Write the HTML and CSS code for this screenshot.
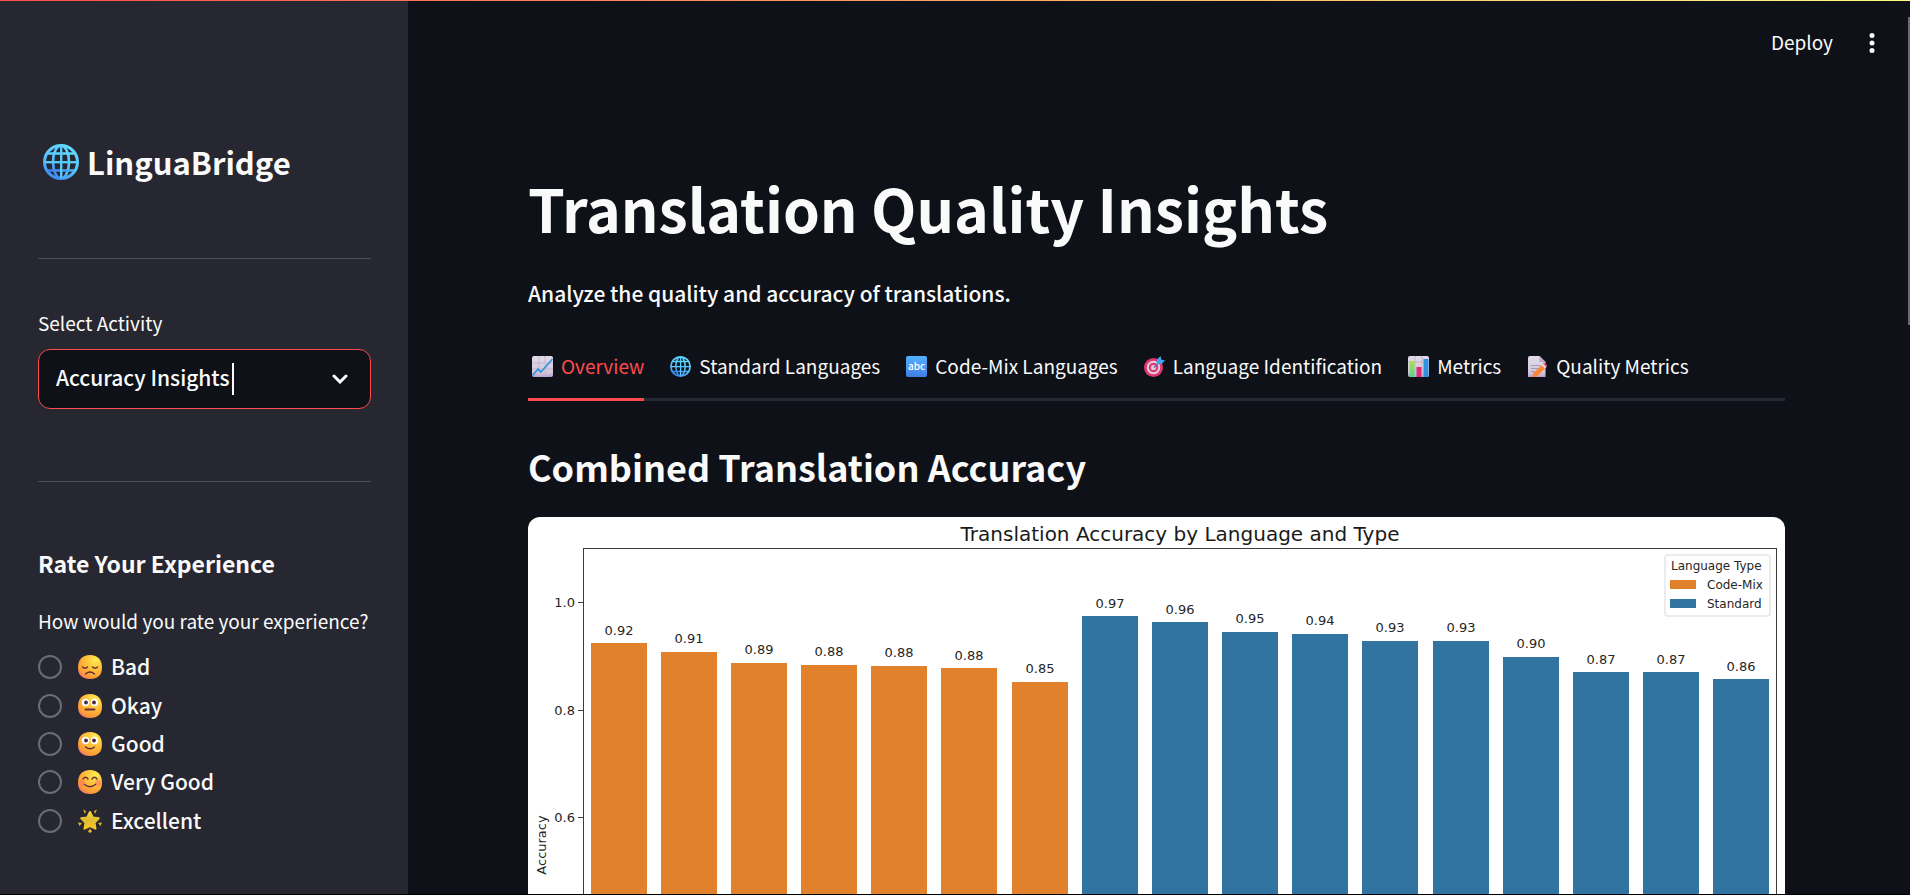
FILE: index.html
```html
<!DOCTYPE html>
<html lang="en">
<head>
<meta charset="utf-8">
<meta name="viewport" content="width=device-width, initial-scale=1">
<title>LinguaBridge</title>
<link rel="stylesheet" href="styles.css">
</head>
<body>
<svg class="defs" aria-hidden="true">
  <defs>
    <linearGradient id="blue" x1="0.7" y1="0" x2="0.2" y2="1"><stop offset="0" stop-color="#5fd8ff"/><stop offset="0.6" stop-color="#55c0ff"/><stop offset="1" stop-color="#3b86f0"/></linearGradient>
    <linearGradient id="tile" x1="0" y1="0" x2="0" y2="1"><stop offset="0" stop-color="#54b0ff"/><stop offset="1" stop-color="#3f7fe6"/></linearGradient>
    <linearGradient id="paper" x1="0" y1="0" x2="0" y2="1"><stop offset="0" stop-color="#e2dbe8"/><stop offset="0.8" stop-color="#d2c6dc"/><stop offset="1" stop-color="#b99fd0"/></linearGradient>
    <radialGradient id="face" cx="0.72" cy="0.2" r="0.95"><stop offset="0" stop-color="#ffea4f"/><stop offset="0.5" stop-color="#ffb938"/><stop offset="0.82" stop-color="#fc9938"/><stop offset="1" stop-color="#f0609a"/></radialGradient>
    <linearGradient id="star" x1="0" y1="0" x2="0" y2="1"><stop offset="0" stop-color="#fbd83a"/><stop offset="0.5" stop-color="#dfbb35"/><stop offset="1" stop-color="#f9c723"/></linearGradient>
    <linearGradient id="green" x1="0" y1="0" x2="0" y2="1"><stop offset="0" stop-color="#b4dc4e"/><stop offset="1" stop-color="#4fd68c"/></linearGradient>
    <symbol id="globe" viewBox="0 0 36 36">
      <g fill="none" stroke="url(#blue)" stroke-width="2.600">
        <circle cx="18" cy="18" r="16.500" stroke-width="3"/>
        <ellipse cx="18" cy="18" rx="8" ry="16.200"/>
        <path d="M4.500 9.500h27M4.500 26.500h27"/>
      </g>
      <g fill="#58c9ff"><rect x="17" y="2" width="2.400" height="32"/><rect x="2" y="17" width="32" height="2.400"/></g>
    </symbol>
    <symbol id="headshape" viewBox="0 0 24 24"><path d="M12 0C4 0 0 5 0 12.500 0 20 4 24 12 24s12-4 12-11.500C24 5 20 0 12 0z" fill="url(#face)"/></symbol>
  </defs>
</svg>

<div class="app">
  <aside class="sidebar">
    <h2 class="brand"><svg class="brand-icon" aria-hidden="true"><use href="#globe"/></svg>LinguaBridge</h2>
    <hr class="rule">
    <label class="field-label" for="activity">Select Activity</label>
    <div class="select-box">
      <select id="activity" class="select"><option>Accuracy Insights</option></select>
      <span class="text-cursor"></span>
      <svg class="chevron" viewBox="0 0 16 10" aria-hidden="true"><path d="M2 2l6 6 6-6" fill="none" stroke="#fafafa" stroke-width="3" stroke-linecap="round" stroke-linejoin="miter"/></svg>
    </div>
    <hr class="rule rule-second">
    <h3 class="rate-title">Rate Your Experience</h3>
    <fieldset class="rating">
      <legend class="rating-legend">How would you rate your experience?</legend>
      <div class="options">
        <label class="option"><input class="radio" type="radio" name="rating">
          <svg class="emoji" viewBox="0 0 24 24" aria-hidden="true"><use href="#headshape"/><g fill="none" stroke="#613139" stroke-width="1.400" stroke-linecap="round"><path d="M4.500 12q2.500 2.500 5 0M14.500 12q2.500 2.500 5 0M7.500 19q4.500-3.800 9 0"/></g></svg>
          <span>Bad</span></label>
        <label class="option"><input class="radio" type="radio" name="rating">
          <svg class="emoji" viewBox="0 0 24 24" aria-hidden="true"><use href="#headshape"/><g fill="#fff"><circle cx="7.500" cy="8.500" r="3.700"/><circle cx="16.500" cy="8.500" r="3.700"/></g><g fill="#4a2545"><circle cx="8" cy="8.500" r="1.900"/><circle cx="16" cy="8.500" r="1.900"/></g><path d="M7.500 15.500h9" stroke="#613139" stroke-width="1.800" stroke-linecap="round"/></svg>
          <span>Okay</span></label>
        <label class="option"><input class="radio" type="radio" name="rating">
          <svg class="emoji" viewBox="0 0 24 24" aria-hidden="true"><use href="#headshape"/><g fill="#fff"><circle cx="7.500" cy="8.500" r="3.700"/><circle cx="16.500" cy="8.500" r="3.700"/></g><g fill="#4a2545"><circle cx="8" cy="8.500" r="1.900"/><circle cx="16" cy="8.500" r="1.900"/></g><path d="M7.500 15q4.500 3.400 9 0" fill="none" stroke="#613139" stroke-width="1.400" stroke-linecap="round"/></svg>
          <span>Good</span></label>
        <label class="option"><input class="radio" type="radio" name="rating">
          <svg class="emoji" viewBox="0 0 24 24" aria-hidden="true"><use href="#headshape"/><g fill="#ff7a63" opacity="0.6"><circle cx="4" cy="13" r="3"/><circle cx="20" cy="13" r="3"/></g><g fill="none" stroke="#613139" stroke-width="1.400" stroke-linecap="round"><path d="M5 9q2.500-3.400 5 0M14 9q2.500-3.400 5 0M6.500 14.500q5.500 4.400 11 0"/></g></svg>
          <span>Very Good</span></label>
        <label class="option"><input class="radio" type="radio" name="rating">
          <svg class="emoji" viewBox="0 0 24 24" aria-hidden="true"><g fill="url(#star)" stroke="url(#star)" stroke-linejoin="round" stroke-width="2"><path d="M12 3l2.800 5.400 6 .9-4.300 4.400 1 6L12 17l-5.500 2.700 1-6L3.200 9.300l6-.9z"/></g><g fill="#e3b62a"><path d="M5 .5l3 1.500-1 3zM19 .5l-3 1.500 1 3zM0 13.500l4 .5-2.500 3zM24 13.500l-4 .5 2.500 3zM12 19.500l2 3q-2 2.400-4 0z"/></g></svg>
          <span>Excellent</span></label>
      </div>
    </fieldset>
  </aside>

  <main class="main">
    <header class="toolbar">
      <button class="deploy" type="button">Deploy</button>
      <button class="menu" type="button" aria-label="Menu"><svg class="dots" viewBox="0 0 6 20" aria-hidden="true"><g fill="#fafafa"><circle cx="3" cy="2.500" r="2.500"/><circle cx="3" cy="10" r="2.500"/><circle cx="3" cy="17.500" r="2.500"/></g></svg></button>
    </header>
    <h1 class="title">Translation Quality Insights</h1>
    <p class="lead">Analyze the quality and accuracy of translations.</p>
    <div class="tabs" role="tablist">
      <button class="tab tab-active" type="button" role="tab" aria-selected="true"><svg class="tab-icon" viewBox="0 0 21 21" aria-hidden="true"><rect width="21" height="21" rx="2" fill="url(#paper)"/><path d="M7 0v21M13 0v21M0 7h21M0 13h21" stroke="#c3b8cd" stroke-width="1"/><path d="M.5 19.500l5.500-6.500 3 3L20.500 3" fill="none" stroke="#3596df" stroke-width="1.800"/></svg>Overview</button>
      <button class="tab" type="button" role="tab"><svg class="tab-icon" aria-hidden="true"><use href="#globe"/></svg>Standard Languages</button>
      <button class="tab" type="button" role="tab"><svg class="tab-icon" viewBox="0 0 21 21" aria-hidden="true"><rect width="21" height="21" rx="2" fill="url(#tile)"/><text class="abc" x="10.500" y="14" text-anchor="middle">abc</text></svg>Code-Mix Languages</button>
      <button class="tab" type="button" role="tab"><svg class="tab-icon" viewBox="0 0 21 21" aria-hidden="true"><circle cx="9.500" cy="11.500" r="9.500" fill="#e0376f"/><circle cx="9.500" cy="11.500" r="6.700" fill="#e3d3e4"/><circle cx="9.500" cy="11.500" r="4.800" fill="#dc3a70"/><circle cx="9.500" cy="11.500" r="2.600" fill="#dfcbdc"/><path d="M10 11.500l5-5" stroke="#7b6ca8" stroke-width="1.600"/><path d="M12.500 7.500l.5-4L16.500 0l.8 3.500 3.700 1-3.500 3.500z" fill="#3fa5f0"/></svg>Language Identification</button>
      <button class="tab" type="button" role="tab"><svg class="tab-icon" viewBox="0 0 21 21" aria-hidden="true"><rect width="21" height="21" rx="2" fill="url(#paper)"/><path d="M7 0v21M14 0v21M0 6h21" stroke="#c3b8cd" stroke-width="1"/><rect x="1.500" y="5" width="5" height="16" fill="url(#green)"/><rect x="8.500" y="11" width="5" height="10" fill="#dc2e78"/><rect x="15.500" y="3" width="5" height="18" fill="#2f93e2"/></svg>Metrics</button>
      <button class="tab" type="button" role="tab"><svg class="tab-icon" viewBox="0 0 21 21" aria-hidden="true"><path d="M3 0h9.500L18.500 6v15H1V2q0-2 2-2z" fill="url(#paper)"/><path d="M12.500 0v6h6z" fill="#b8a9c8"/><path d="M4 9.500h9M4 12.500h8M4 15.500h4" stroke="#a99bb8" stroke-width="1.200"/><path d="M6 17.500L14.500 9l3.500 3.500-8.500 8.500H5.500z" fill="#ff8536"/><path d="M14.500 9l1.500-1.500 3.500 3.500-1.500 1.500z" fill="#e6dce9"/><path d="M16 7.500l1-1 3.500 3.500-1 1z" fill="#ee4260"/></svg>Quality Metrics</button>
    </div>
    <h2 class="section-title">Combined Translation Accuracy</h2>
    <svg class="chart" viewBox="0 0 1257 754" role="img" aria-label="Translation Accuracy by Language and Type">
      <rect width="1257" height="754" fill="#fff"/>
      <text class="chart-title" x="652" y="24" text-anchor="middle">Translation Accuracy by Language and Type</text>
      <g fill="#e1812c">
        <rect x="63" y="126" width="56" height="498"/><rect x="133" y="135" width="56" height="489"/><rect x="203" y="146" width="56" height="478"/><rect x="273" y="148" width="56" height="476"/><rect x="343" y="149" width="56" height="475"/><rect x="413" y="151" width="56" height="473"/><rect x="484" y="165" width="56" height="459"/>
      </g>
      <g fill="#3274a1">
        <rect x="554" y="99" width="56" height="525"/><rect x="624" y="105" width="56" height="519"/><rect x="694" y="115" width="56" height="509"/><rect x="764" y="117" width="56" height="507"/><rect x="834" y="124" width="56" height="500"/><rect x="905" y="124" width="56" height="500"/><rect x="975" y="140" width="56" height="484"/><rect x="1045" y="155" width="56" height="469"/><rect x="1115" y="155" width="56" height="469"/><rect x="1185" y="162" width="56" height="462"/>
      </g>
      <g class="chart-text" text-anchor="middle">
        <text x="91" y="118">0.92</text><text x="161" y="126">0.91</text><text x="231" y="137">0.89</text><text x="301" y="139">0.88</text><text x="371" y="140">0.88</text><text x="441" y="143">0.88</text><text x="512" y="156">0.85</text><text x="582" y="91">0.97</text><text x="652" y="97">0.96</text><text x="722" y="106">0.95</text><text x="792" y="108">0.94</text><text x="862" y="115">0.93</text><text x="933" y="115">0.93</text><text x="1003" y="131">0.90</text><text x="1073" y="147">0.87</text><text x="1143" y="147">0.87</text><text x="1213" y="154">0.86</text>
      </g>
      <g class="chart-text" text-anchor="end">
        <text x="47" y="90">1.0</text><text x="47" y="198">0.8</text><text x="47" y="305">0.6</text>
      </g>
      <text class="chart-text" transform="translate(18 328) rotate(-90)" text-anchor="middle">Accuracy</text>
      <g class="axis"><rect x="55" y="31" width="1193" height="593"/><path d="M50 85h5M50 193h5M50 300h5M50 408h5M50 515h5M50 623h5"/></g>
      <rect x="1137" y="38" width="105" height="61" rx="2" fill="#fff" stroke="#d9d9d9"/>
      <g class="chart-legend"><text x="1143" y="53">Language Type</text><text x="1179" y="72">Code-Mix</text><text x="1179" y="91">Standard</text></g>
      <rect x="1142" y="63" width="26" height="9" fill="#e1812c"/><rect x="1142" y="82" width="26" height="9" fill="#3274a1"/>
    </svg>
  </main>
</div>
<div class="top-strip"></div>
<div class="bottom-strip"></div>
<div class="scroll-thumb"></div>
</body>
</html>
```
FILE: styles.css
```css
* { box-sizing: border-box; }

body {
  margin: 0;
  height: 100vh;
  overflow: hidden;
  background: #0e1117;
  color: #fafafa;
  font-family: "Noto Sans CJK SC", "Noto Sans", sans-serif;
  font-size: 21px;
  font-weight: 500;
  line-height: 32px;
}

h1, h2, h3, p, fieldset, legend { margin: 0; padding: 0; border: 0; }
button, select { font-family: inherit; font-weight: inherit; color: inherit; background: none; border: 0; padding: 0; }

.defs { position: absolute; width: 0; height: 0; }

.app { display: flex; height: 100%; overflow: hidden; }

.sidebar {
  flex: 0 0 408px;
  padding: 141px 37px 0 38px;
  background: #262730;
}

.brand {
  display: flex;
  align-items: center;
  gap: 8px;
  padding-left: 5px;
  font-size: 31px;
  line-height: 42px;
  font-weight: 600;
}
.brand-icon { width: 36px; height: 36px; }

.rule { height: 1px; margin: 75px 0 50px; border: 0; background: #4c4d55; }
.rule-second { margin: 72px 0 66px; }

.field-label, .rating-legend { display: block; font-size: 19px; line-height: 28px; font-weight: 400; }

.select-box { position: relative; margin-top: 12px; }
.select {
  display: block;
  width: 100%;
  height: 60px;
  padding: 0 17px 4px;
  border: 1px solid #ff4b4b;
  border-radius: 12px;
  background: #0e1117;
  font-size: 21px;
  appearance: none;
  outline: none;
}
.text-cursor { position: absolute; left: 194px; top: 14px; width: 2px; height: 32px; background: #fafafa; }
.chevron { position: absolute; right: 23px; top: 25px; width: 16px; height: 10px; }

.rate-title { font-size: 23px; line-height: 30px; font-weight: 600; }
.rating { margin-top: 29px; }
.options { display: grid; grid-auto-rows: 1fr; height: 192px; margin-top: 13px; }
.option { display: flex; align-items: center; }
.option span { padding-bottom: 2px; }
.radio {
  appearance: none;
  width: 24px;
  height: 24px;
  margin: 0 16px 0 0;
  border: 2px solid #6b6c73;
  border-radius: 50%;
}
.emoji { width: 24px; height: 24px; margin-right: 9px; }

.main { flex: 1; min-width: 0; padding: 0 125px 0 120px; }

.toolbar {
  display: flex;
  align-items: center;
  justify-content: flex-end;
  gap: 36px;
  height: 86px;
  margin-right: -90px;
}
.deploy { font-size: 19px; font-weight: 400; line-height: 28px; padding-bottom: 2px; }
.menu { display: flex; }
.dots { width: 6px; height: 20px; }

.title { margin-top: 86px; font-size: 59px; line-height: 72px; font-weight: 700; }
.lead { margin-top: 33px; }

.tabs {
  display: flex;
  gap: 22px;
  height: 60px;
  margin-top: 32px;
  box-shadow: inset 0 -3px #262730;
}
.tab {
  display: flex;
  align-items: center;
  gap: 8px;
  padding: 0 0 7px 4px;
  border-bottom: 3px solid transparent;
  font-size: 19px;
  font-weight: 400;
  line-height: 28px;
  white-space: nowrap;
}
.tab-active { color: #ff4b4b; border-color: #ff4b4b; }
.tab-icon { flex: none; width: 21px; height: 21px; }
.abc { font: 500 10px "Noto Sans CJK SC", sans-serif; fill: #fff; }

.section-title { margin-top: 41px; font-size: 36px; line-height: 48px; font-weight: 600; }

.chart { display: block; width: 100%; margin-top: 27px; border-radius: 12px; }
.chart-title { font: 20px "DejaVu Sans", sans-serif; fill: #1a1a1a; }
.chart-text { font: 13px "DejaVu Sans", sans-serif; fill: #262626; }
.chart-legend { font: 12px "DejaVu Sans", sans-serif; fill: #262626; }
.axis { fill: none; stroke: #3c3c3c; stroke-width: 1; shape-rendering: crispEdges; }

.top-strip { position: absolute; inset: 0 0 auto; height: 1px; background: linear-gradient(90deg, #ff4b4b, #fffd80); }
.bottom-strip { position: absolute; inset: auto 0 0; height: 1px; background: #000; }
.scroll-thumb { position: absolute; top: 17px; right: 0; width: 2px; height: 308px; background: #6b6b6f; }
```
